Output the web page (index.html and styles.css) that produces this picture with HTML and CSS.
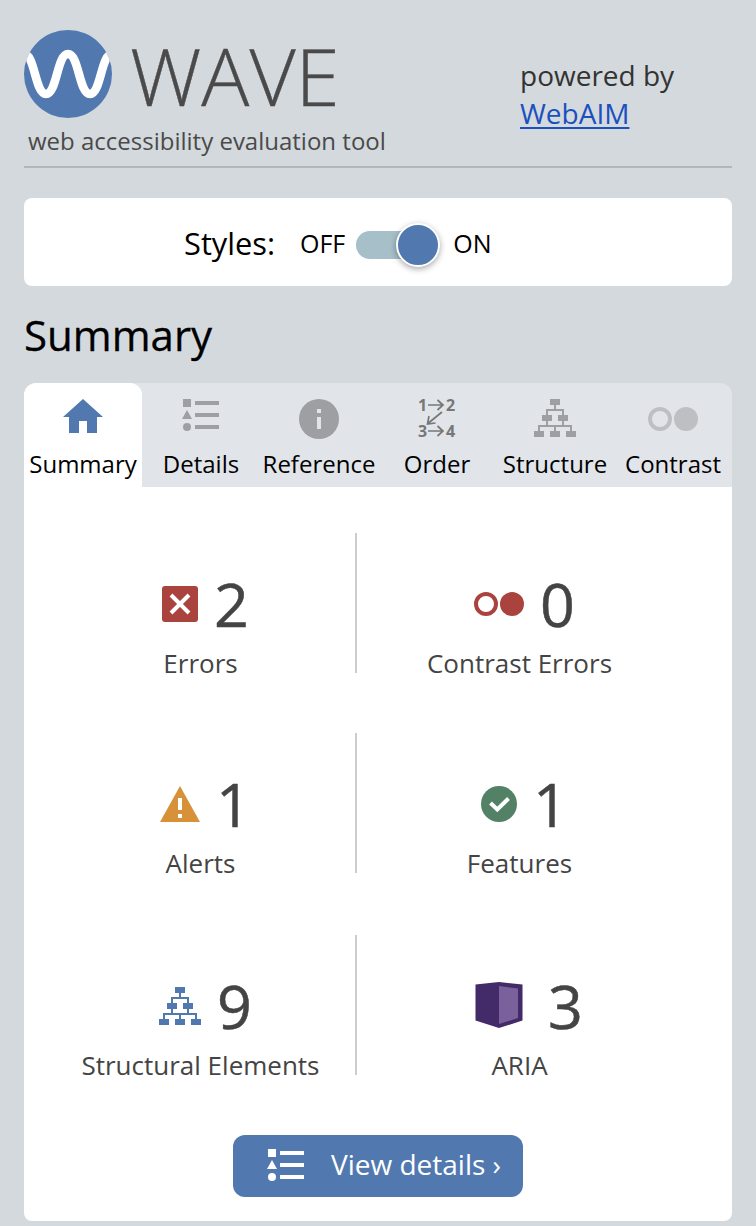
FILE: index.html
```html
<!DOCTYPE html>
<html lang="en">
<head>
<meta charset="utf-8">
<title>WAVE</title>
<link rel="stylesheet" href="styles.css">
</head>
<body>
<svg class="defs" width="0" height="0">
  <symbol id="list" viewBox="0 0 38 32"><path d="M1 0h8v8H1zM5 11l5 9H0zM13 2h24v4H13zM13 14h24v4H13zM13 26h24v4H13z"/><circle cx="5" cy="28" r="4"/></symbol>
  <symbol id="tree" viewBox="0 0 42 38"><path d="M16 0h10v6h-4v4h8v6h4v6h-4v4h8v6h4v6H32v-6h4v-4H22v4h4v6H16v-6h4v-4H6v4h4v6H0v-6h4v-6h8v-4H8v-6h4v-6h8V6h-4zM14 12v4h4v6h-4v4h14v-4h-4v-6h4v-4z"/></symbol>
  <symbol id="rings" viewBox="0 0 50 24"><circle cx="12" cy="12" r="10" fill="none" stroke="currentColor" stroke-width="4"/><circle cx="38" cy="12" r="12"/></symbol>
</svg>
<header class="header">
  <div class="brand">
    <div class="logo-row">
      <svg width="88" height="88" viewBox="0 0 88 88"><clipPath id="disc"><circle cx="44" cy="44" r="44"/></clipPath><g clip-path="url(#disc)"><path fill="#5179b0" d="M0 0h88v88H0z"/><path d="M0 24C11 24 11 64 22 64S33 24 44 24S55 64 66 64S77 24 88 24" fill="none" stroke="#fff" stroke-width="8.500"/></g></svg>
      <span class="wordmark">WAVE</span>
    </div>
    <div class="tagline">web accessibility evaluation tool</div>
  </div>
  <div class="powered">powered by<br><a href="#">WebAIM</a></div>
</header>
<section class="styles-panel">
  <span class="styles-label">Styles:</span>
  <span class="state">OFF</span>
  <span class="switch"><span class="thumb"></span></span>
  <span class="state">ON</span>
</section>
<h1 class="title">Summary</h1>
<nav class="tabs">
  <div class="tab active"><svg width="40" height="40" viewBox="0 0 40 40"><path d="M20 0l20 18h-6v16H24V22h-8v12H6V18H0z"/></svg><span>Summary</span></div>
  <div class="tab"><svg width="38" height="40" viewBox="0 0 38 40"><use href="#list" width="38" height="32"/></svg><span>Details</span></div>
  <div class="tab"><svg width="40" height="40" viewBox="0 0 40 40"><circle cx="20" cy="20" r="20"/><path fill="#e1e4e9" d="M18 10h4v4h-4zM18 18h4v12h-4z"/></svg><span>Reference</span></div>
  <div class="tab order"><svg class="order-icon" width="38" height="40" viewBox="0 0 38 40"><g class="order-num"><text x="0" y="12">1</text><text x="28" y="12">2</text><text x="0" y="38">3</text><text x="28" y="38">4</text></g><path d="M10 6h15M19.500 1l5.500 5l-5.500 5M10 32h15M19.500 27l5.500 5l-5.500 5M24 13L10.500 24M11 17l-1.500 8l8-1" fill="none" stroke="#777" stroke-width="1.700"/></svg><span>Order</span></div>
  <div class="tab"><svg width="42" height="40" viewBox="0 0 42 40"><use href="#tree" width="42" height="38"/></svg><span>Structure</span></div>
  <div class="tab contrast"><svg width="50" height="40" viewBox="0 0 50 40"><use href="#rings" y="8" width="50" height="24"/></svg><span>Contrast</span></div>
</nav>
<main class="results">
  <div class="grid">
    <div class="cell left red"><div class="count"><svg width="36" height="36" viewBox="0 0 36 36"><rect width="36" height="36" rx="3"/><path d="M9 9l18 18M27 9L9 27" stroke="#fff" stroke-width="4"/></svg><b>2</b></div><div class="name">Errors</div></div>
    <div class="cell red"><div class="count"><svg width="50" height="24"><use href="#rings" width="50" height="24"/></svg><b>0</b></div><div class="name">Contrast Errors</div></div>
    <div class="cell left amber"><div class="count"><svg width="40" height="36" viewBox="0 0 40 36"><path d="M20 0l20 36H0z"/><path fill="#fff" d="M18 12h4v12h-4zM18 28h4v4h-4z"/></svg><b>1</b></div><div class="name">Alerts</div></div>
    <div class="cell green"><div class="count"><svg width="36" height="36" viewBox="0 0 36 36"><circle cx="18" cy="18" r="18"/><path d="M9.500 17l6.800 6.500L27.500 12.500" fill="none" stroke="#fff" stroke-width="4"/></svg><b>1</b></div><div class="name">Features</div></div>
    <div class="cell left blue last"><div class="count"><svg width="42" height="38"><use href="#tree" width="42" height="38"/></svg><b>9</b></div><div class="name">Structural Elements</div></div>
    <div class="cell purple last"><div class="count wide"><svg width="48" height="50" viewBox="0 0 48 50"><path d="M.5 3.500L24 1L47.500 3.500v36L24 47L.5 39.500z"/><path fill="#7a619b" d="M24 5L43 7.500v29.500L24 43z"/></svg><b>3</b></div><div class="name">ARIA</div></div>
  </div>
  <button class="view"><svg width="38" height="32"><use href="#list" width="38" height="32"/></svg><span>View details ›</span></button>
</main>
</body>
</html>
```
FILE: styles.css
```css
* { box-sizing: border-box; }
body { margin: 0; height: 1226px; padding: 30px 24px 0; background: #d4d9dd; color: #000; font-family: "Open Sans", "Noto Sans", sans-serif; overflow: hidden; }
svg { display: block; flex: none; fill: currentColor; }
.defs { position: absolute; }
.header { display: flex; height: 138px; border-bottom: 2px solid #b0b6bb; }
.brand { width: 496px; color: #4a4a4a; }
.logo-row { display: flex; align-items: center; height: 88px; }
.wordmark { margin: 2px 0 0 18px; font: 300 80px/84px "Open Sans", sans-serif; white-space: nowrap; -webkit-text-stroke: .4px; }
.tagline { margin: 9px 0 0 4px; font-size: 24px; line-height: 28px; white-space: nowrap; }
.powered { padding-top: 26px; font-size: 28px; line-height: 38px; color: #333; white-space: nowrap; }
.powered a { color: #1a50c0; text-decoration-thickness: 2px; text-underline-offset: 3px; text-decoration-skip-ink: none; }
.styles-panel { display: flex; align-items: center; height: 88px; margin-top: 30px; padding: 0 0 0 160px; background: #fff; border-radius: 8px; }
.styles-label { width: 116px; margin-top: 1px; font-size: 30.8px; line-height: 40px; }
.state { margin-top: 2px; font-size: 25px; line-height: 40px; }
.switch { position: relative; width: 80px; height: 28px; margin: 6px 17px 0 11px; border-radius: 14px; background: #a6bfc9; }
.thumb { position: absolute; top: -8px; right: -4px; width: 44px; height: 44px; border: 2px solid #fff; border-radius: 50%; background: #5179b0; box-shadow: 0 2px 6px rgba(0,0,0,.35); }
.title { margin: 20px 0 19px; font-size: 42px; font-weight: 400; line-height: 58px; -webkit-text-stroke: .3px; }
.tabs { display: flex; height: 104px; background: #e1e4e9; border-radius: 12px 12px 0 0; }
.tab { width: 118px; display: flex; flex-direction: column; align-items: center; padding-top: 16px; color: #9e9fa3; }
.tab span { margin-top: 9px; font-size: 24px; line-height: 32px; color: #000; white-space: nowrap; }
.tab.active { background: #fff; color: #5179b0; border-radius: 12px 12px 0 0; }
.tab.contrast { color: #bebfc3; }
.order-icon { overflow: visible; }
.order-num { fill: #777; font-size: 16px; font-weight: 700; }
.results { display: flex; flex-direction: column; align-items: center; height: 734px; padding-top: 46px; background: #fff; border-radius: 0 0 8px 8px; }
.grid { display: grid; grid-template-columns: 312px 324px; row-gap: 60px; align-self: flex-start; margin-left: 21px; }
.cell { height: 140px; padding-top: 35px; }
.cell.left { border-right: 2px solid #ccc; }
.cell.last { margin-top: 2px; }
.count { display: flex; justify-content: center; align-items: center; height: 72px; padding-left: 11px; }
.count.wide { padding-left: 20px; }
.count b { margin: 0 0 0 16px; font-size: 61px; font-weight: 400; line-height: 72px; color: #444; -webkit-text-stroke: .5px; }
.count.wide b { margin-left: 25px; }
.name { margin-top: 6px; padding-left: 1px; font-size: 26px; line-height: 34px; text-align: center; color: #444; }
.red { color: #aa423e; }
.amber { color: #d79139; }
.green { color: #528166; }
.blue { color: #5179b0; }
.purple { color: #432a68; }
.view { display: flex; align-items: center; width: 290px; height: 62px; margin-top: 60px; padding: 0 0 2px 34px; border: 0; border-radius: 12px; background: #5179b0; color: #fff; font: 400 28px/40px "Open Sans", sans-serif; white-space: nowrap; }
.view span { margin: -2px 0 0 26px; }
```
